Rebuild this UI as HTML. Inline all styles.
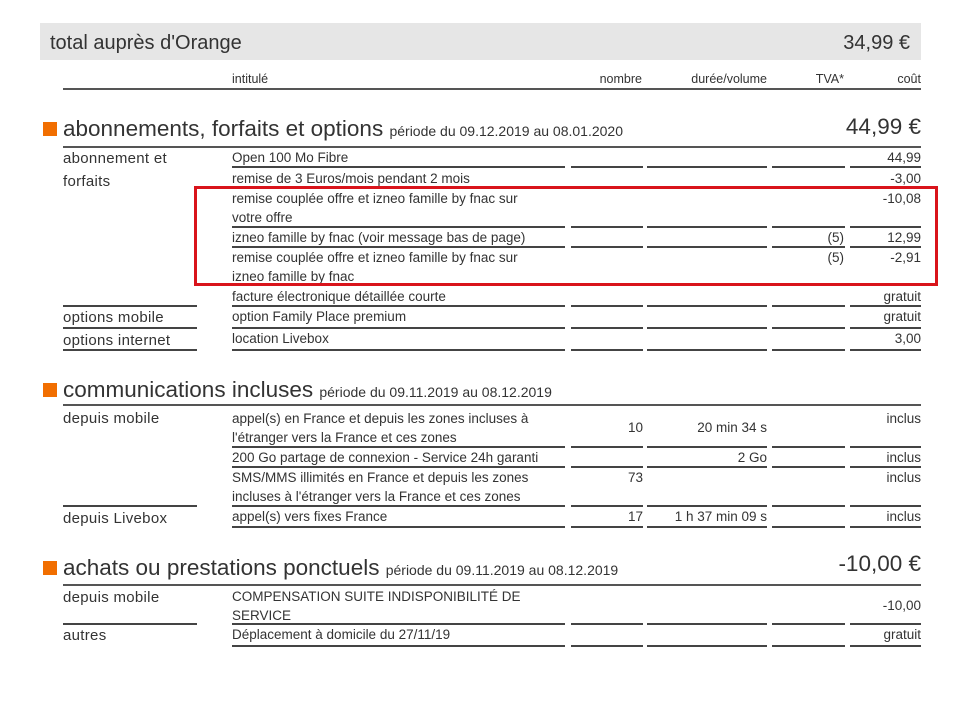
<!DOCTYPE html>
<html><head><meta charset="utf-8"><style>
body{margin:0;width:960px;height:720px;background:#fff;position:relative;overflow:hidden;font-family:"Liberation Sans",sans-serif;color:#333}
.t{position:absolute;white-space:nowrap;font-size:13.5px;line-height:15px}
.r{text-align:right}
.lab{font-size:15px;line-height:17px;letter-spacing:.3px}
.h{font-size:20px;line-height:22px}
.sq{position:absolute;left:43px;width:14px;height:14px;background:#f16e00}
.ln{position:absolute;left:0;width:960px;height:2px}
.ln i{position:absolute;top:0;height:2px;background:#444}
.ln i:nth-child(1){left:232px;width:333px}
.ln i:nth-child(2){left:571px;width:72px}
.ln i:nth-child(3){left:647px;width:120px}
.ln i:nth-child(4){left:772px;width:73px}
.ln i:nth-child(5){left:850px;width:71px}
.ln i.L{left:63px;width:134px}
.full{position:absolute;left:63px;width:858px;height:2px;background:#555}
.ti{font-size:22.5px;line-height:24px}
.ti span{font-size:14px}
</style></head><body>
<div style="position:absolute;left:40px;top:23px;width:881px;height:37px;background:#e6e6e6"></div>
<div class="t h" style="left:50px;top:32px">total auprès d'Orange</div>
<div class="t h r" style="left:780px;width:130px;top:32px">34,99 €</div>

<div class="t" style="left:232px;top:72px;font-size:12.5px">intitulé</div>
<div class="t r" style="left:560px;width:82px;top:72px;font-size:12.5px">nombre</div>
<div class="t r" style="left:647px;width:120px;top:72px;font-size:12.5px">durée/volume</div>
<div class="t r" style="left:772px;width:72px;top:72px;font-size:12.5px">TVA*</div>
<div class="t r" style="left:850px;width:71px;top:72px;font-size:12.5px">coût</div>
<div class="full" style="top:88px"></div>

<div class="sq" style="top:122px"></div>
<div class="t ti" style="left:63px;top:117px">abonnements, forfaits et options <span>période du 09.12.2019 au 08.01.2020</span></div>
<div class="t r ti" style="left:780px;width:141px;top:115px">44,99 €</div>
<div class="full" style="top:146px"></div>

<div class="t lab" style="left:63px;top:150px">abonnement et</div>
<div class="t lab" style="left:63px;top:173px">forfaits</div>
<div class="t" style="left:232px;top:150px">Open 100 Mo Fibre</div><div class="t r" style="left:850px;width:71px;top:150px">44,99</div>
<div class="ln" style="top:166px"><i></i><i></i><i></i><i></i><i></i></div>
<div class="t" style="left:232px;top:171px">remise de 3 Euros/mois pendant 2 mois</div><div class="t r" style="left:850px;width:71px;top:171px">-3,00</div>
<div class="t" style="left:232px;top:191px">remise couplée offre et izneo famille by fnac sur</div>
<div class="t" style="left:232px;top:210px">votre offre</div><div class="t r" style="left:850px;width:71px;top:191px">-10,08</div>
<div class="ln" style="top:226px"><i></i><i></i><i></i><i></i><i></i></div>
<div class="t" style="left:232px;top:230px">izneo famille by fnac (voir message bas de page)</div>
<div class="t r" style="left:772px;width:72px;top:230px">(5)</div><div class="t r" style="left:850px;width:71px;top:230px">12,99</div>
<div class="ln" style="top:246px"><i></i><i></i><i></i><i></i><i></i></div>
<div class="t" style="left:232px;top:250px">remise couplée offre et izneo famille by fnac sur</div>
<div class="t" style="left:232px;top:269px">izneo famille by fnac</div>
<div class="t r" style="left:772px;width:72px;top:250px">(5)</div><div class="t r" style="left:850px;width:71px;top:250px">-2,91</div>
<div class="t" style="left:232px;top:289px">facture électronique détaillée courte</div><div class="t r" style="left:850px;width:71px;top:289px">gratuit</div>
<div class="ln" style="top:305px"><i></i><i></i><i></i><i></i><i></i><i class="L"></i></div>
<div class="t lab" style="left:63px;top:309px">options mobile</div>
<div class="t" style="left:232px;top:309px">option Family Place premium</div><div class="t r" style="left:850px;width:71px;top:309px">gratuit</div>
<div class="ln" style="top:327px"><i></i><i></i><i></i><i></i><i></i><i class="L"></i></div>
<div class="t lab" style="left:63px;top:332px">options internet</div>
<div class="t" style="left:232px;top:331px">location Livebox</div><div class="t r" style="left:850px;width:71px;top:331px">3,00</div>
<div class="ln" style="top:349px"><i></i><i></i><i></i><i></i><i></i><i class="L"></i></div>
<div style="position:absolute;left:194px;top:186px;width:738px;height:94px;border:3px solid #d9141b"></div>

<div class="sq" style="top:383px"></div>
<div class="t ti" style="left:63px;top:378px">communications incluses <span>période du 09.11.2019 au 08.12.2019</span></div>
<div class="full" style="top:404px"></div>
<div class="t lab" style="left:63px;top:410px">depuis mobile</div>
<div class="t" style="left:232px;top:411px">appel(s) en France et depuis les zones incluses à</div>
<div class="t" style="left:232px;top:430px">l'étranger vers la France et ces zones</div>
<div class="t r" style="left:571px;width:72px;top:420px">10</div><div class="t r" style="left:647px;width:120px;top:420px">20 min 34 s</div><div class="t r" style="left:850px;width:71px;top:411px">inclus</div>
<div class="ln" style="top:446px"><i></i><i></i><i></i><i></i><i></i></div>
<div class="t" style="left:232px;top:450px">200 Go partage de connexion - Service 24h garanti</div>
<div class="t r" style="left:647px;width:120px;top:450px">2 Go</div><div class="t r" style="left:850px;width:71px;top:450px">inclus</div>
<div class="ln" style="top:466px"><i></i><i></i><i></i><i></i><i></i></div>
<div class="t" style="left:232px;top:470px">SMS/MMS illimités en France et depuis les zones</div>
<div class="t" style="left:232px;top:489px">incluses à l'étranger vers la France et ces zones</div>
<div class="t r" style="left:571px;width:72px;top:470px">73</div><div class="t r" style="left:850px;width:71px;top:470px">inclus</div>
<div class="ln" style="top:505px"><i></i><i></i><i></i><i></i><i></i><i class="L"></i></div>
<div class="t lab" style="left:63px;top:510px">depuis Livebox</div>
<div class="t" style="left:232px;top:509px">appel(s) vers fixes France</div>
<div class="t r" style="left:571px;width:72px;top:509px">17</div><div class="t r" style="left:647px;width:120px;top:509px">1 h 37 min 09 s</div><div class="t r" style="left:850px;width:71px;top:509px">inclus</div>
<div class="ln" style="top:526px"><i></i><i></i><i></i><i></i><i></i></div>

<div class="sq" style="top:561px"></div>
<div class="t ti" style="left:63px;top:556px">achats ou prestations ponctuels <span>période du 09.11.2019 au 08.12.2019</span></div>
<div class="t r ti" style="left:780px;width:141px;top:552px">-10,00 €</div>
<div class="full" style="top:584px"></div>
<div class="t lab" style="left:63px;top:589px">depuis mobile</div>
<div class="t" style="left:232px;top:589px">COMPENSATION SUITE INDISPONIBILITÉ DE</div>
<div class="t" style="left:232px;top:608px">SERVICE</div>
<div class="t r" style="left:850px;width:71px;top:598px">-10,00</div>
<div class="ln" style="top:623px"><i></i><i></i><i></i><i></i><i></i><i class="L"></i></div>
<div class="t lab" style="left:63px;top:627px">autres</div>
<div class="t" style="left:232px;top:627px">Déplacement à domicile du 27/11/19</div>
<div class="t r" style="left:850px;width:71px;top:627px">gratuit</div>
<div class="ln" style="top:645px"><i></i><i></i><i></i><i></i><i></i></div>
</body></html>
